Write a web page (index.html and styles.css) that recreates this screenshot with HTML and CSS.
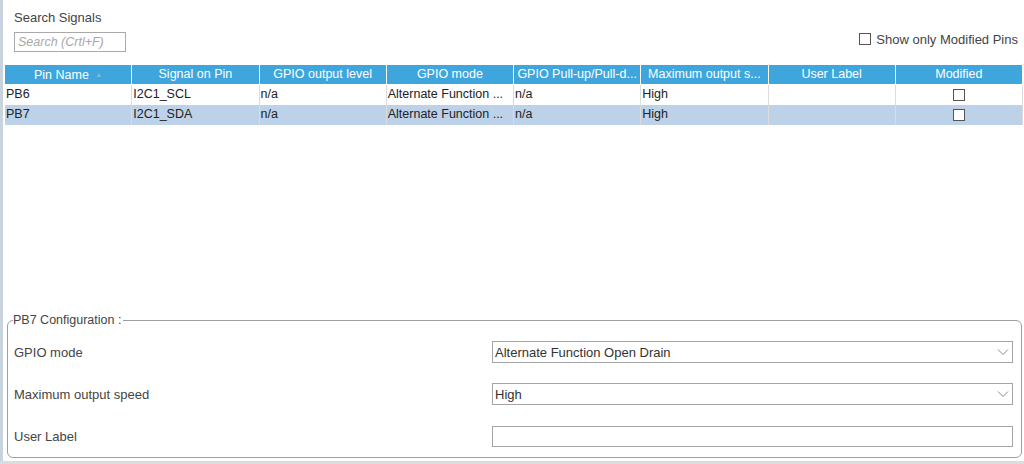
FILE: index.html
```html
<!DOCTYPE html>
<html lang="en">
<head>
    <meta charset="UTF-8">
    <meta name="viewport" content="width=device-width, initial-scale=1.0">
    <title>Pin Configuration</title>
    <link rel="stylesheet" href="styles.css">
</head>
<body>
    <div id="pin-view">
        <div class="search-bar">
            <div class="search-left">
                <div class="search-title">Search Signals</div>
                <input type="text" class="search-input" placeholder="Search (Crtl+F)" />
            </div>
            <label class="modified-only"><span class="box"></span>Show only Modified Pins</label>
        </div>

        <div class="pin-table">
            <div class="row head">
                <div class="cell">Pin Name <span class="sort">&#9650;</span></div>
                <div class="cell">Signal on Pin</div>
                <div class="cell">GPIO output level</div>
                <div class="cell">GPIO mode</div>
                <div class="cell">GPIO Pull-up/Pull-d...</div>
                <div class="cell">Maximum output s...</div>
                <div class="cell">User Label</div>
                <div class="cell">Modified</div>
            </div>
            <div class="row">
                <div class="cell">PB6</div>
                <div class="cell">I2C1_SCL</div>
                <div class="cell">n/a</div>
                <div class="cell">Alternate Function ...</div>
                <div class="cell">n/a</div>
                <div class="cell">High</div>
                <div class="cell"></div>
                <div class="cell center"><span class="box"></span></div>
            </div>
            <div class="row selected">
                <div class="cell">PB7</div>
                <div class="cell">I2C1_SDA</div>
                <div class="cell">n/a</div>
                <div class="cell">Alternate Function ...</div>
                <div class="cell">n/a</div>
                <div class="cell">High</div>
                <div class="cell"></div>
                <div class="cell center"><span class="box"></span></div>
            </div>
        </div>

        <fieldset class="config">
            <legend>PB7 Configuration :</legend>
            <div class="field">
                <span>GPIO mode</span>
                <div class="select">Alternate Function Open Drain<svg width="12" height="8" viewBox="0 0 12 8"><path d="M1 1.5l5 5 5-5" fill="none" stroke="#8a8a8a" stroke-width="1"/></svg></div>
            </div>
            <div class="field">
                <span>Maximum output speed</span>
                <div class="select">High<svg width="12" height="8" viewBox="0 0 12 8"><path d="M1 1.5l5 5 5-5" fill="none" stroke="#8a8a8a" stroke-width="1"/></svg></div>
            </div>
            <div class="field">
                <span>User Label</span>
                <input type="text" class="text-field" />
            </div>
        </fieldset>
    </div>
    <div class="bottom-strip"></div>
</body>
</html>
```

FILE: styles.css
```css
body {
    margin: 0;
    font-family: "Liberation Sans", Arial, sans-serif;
    font-size: 12px;
    color: #333;
    background: #fff;
    width: 1024px;
    height: 464px;
    overflow: hidden;
}
#pin-view {
    height: 461px;
    border-left: 3px solid #c9d3de;
    box-sizing: border-box;
    display: flex;
    flex-direction: column;
}
.bottom-strip {
    height: 3px;
    background: #d9dde2;
}
.search-bar {
    display: flex;
    justify-content: space-between;
    padding: 9px 6px 0 11px;
    height: 55px;
    box-sizing: border-box;
}
.search-title {
    font-size: 13px;
    color: #444;
    line-height: 17px;
}
.search-input {
    margin-top: 6px;
    width: 112px;
    height: 20px;
    box-sizing: border-box;
    border: 1px solid #a9a9a9;
    padding: 0 3px;
    font-family: inherit;
    font-size: 12.5px;
    outline: none;
}
.search-input::placeholder {
    color: #a8a8a8;
    font-style: italic;
}
.modified-only {
    display: flex;
    align-items: center;
    gap: 5px;
    margin-top: 23px;
    height: 14px;
    font-size: 13px;
    color: #444;
}
.box {
    display: inline-block;
    width: 10px;
    height: 10px;
    border: 1px solid #555;
    background: #fff;
}
.pin-table {
    margin: 10px 1px 0 2px;
    font-size: 12.5px;
}
.row {
    display: grid;
    grid-template-columns: repeat(8, 1fr);
    height: 20px;
}
.row.head {
    height: 19px;
    background: #3ea6dc;
    color: #fff;
    margin-bottom: 1px;
}
.row.selected {
    background: #bdd2e8;
}
.cell {
    border-right: 1px solid #dcdcdc;
    padding: 0 1px;
    line-height: 19px;
    white-space: nowrap;
    overflow: hidden;
    color: #222;
}
.head .cell {
    text-align: center;
    color: #fff;
    line-height: 19px;
    border-right: 1px solid #fff;
}
.cell.center {
    display: flex;
    justify-content: center;
    align-items: center;
}
.sort {
    font-size: 7px;
    color: #8fb8d0;
    vertical-align: 2px;
    margin-left: 3px;
}
.config {
    margin: auto 2px 3px 4px;
    border: 1px solid #9e9e9e;
    border-radius: 6px;
    padding: 4px 8px 1px 6px;
    height: 145px;
    box-sizing: border-box;
}
.config legend {
    padding: 0 2px 0 0;
    margin-left: -1px;
    color: #444;
    font-size: 12.5px;
}
.field {
    display: grid;
    grid-template-columns: 478px 1fr;
    align-items: center;
    height: 42px;
    color: #444;
    font-size: 13px;
}
.select, .text-field {
    height: 22px;
    box-sizing: border-box;
    border: 1px solid #a5a5a5;
    background: #fff;
}
.select {
    display: flex;
    align-items: center;
    justify-content: space-between;
    padding: 0 3px 0 2px;
    font-size: 13px;
    color: #333;
}
.text-field {
    height: 21px;
    outline: none;
}
```
